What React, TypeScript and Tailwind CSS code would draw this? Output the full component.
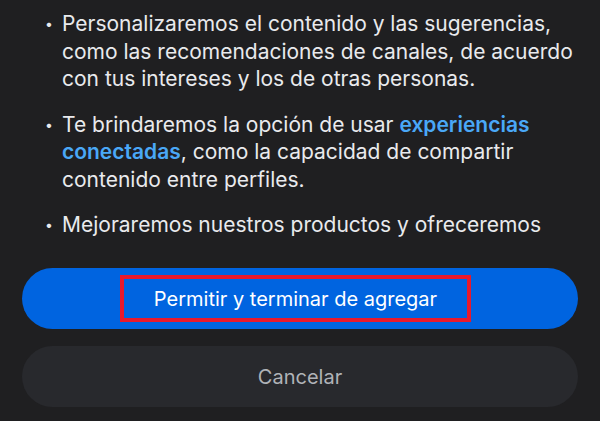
import React from "react";

type Item = { parts: { text: string; link?: boolean }[] };

const items: Item[] = [
  {
    parts: [
      {
        text: "Personalizaremos el contenido y las sugerencias, como las recomendaciones de canales, de acuerdo con tus intereses y los de otras personas.",
      },
    ],
  },
  {
    parts: [
      { text: "Te brindaremos la opción de usar " },
      { text: "experiencias conectadas", link: true },
      { text: ", como la capacidad de compartir contenido entre perfiles." },
    ],
  },
  {
    parts: [
      {
        text: "Mejoraremos nuestros productos y ofreceremos anuncios más relevantes en función de tu actividad.",
      },
    ],
  },
];

const App = () => {
  return (
    <div
      className="w-[600px] h-[421px] bg-[#1f1f21] flex flex-col overflow-hidden"
      style={{ fontFamily: "Inter, 'Noto Sans', sans-serif" }}
    >
      <div className="h-[238px] overflow-hidden pt-[10px] pl-[42px] pr-[20px]">
        <ul className="flex flex-col gap-[18px]">
          {items.map((item, i) => (
            <li key={i} className="flex text-[21px] leading-[27.5px] text-[#e9eaed]">
              <span className="w-[20px] shrink-0 text-[14px] pl-[3px]">•</span>
              <span>
                {item.parts.map((p, j) =>
                  p.link ? (
                    <span key={j} className="font-semibold text-[#4aa8f7]">
                      {p.text}
                    </span>
                  ) : (
                    <span key={j}>{p.text}</span>
                  )
                )}
              </span>
            </li>
          ))}
        </ul>
      </div>

      <div className="flex flex-col gap-[17px] px-[22px] pt-[30px]">
        <button className="h-[61px] rounded-full bg-[#0064e0] flex items-center justify-center">
          <span className="-ml-[9px] border-[4px] border-[#e8192c] h-[47px] w-[351px] flex items-center justify-center text-[20px] text-white">
            Permitir y terminar de agregar
          </span>
        </button>
        <button className="h-[61px] rounded-full bg-[#28292d] flex items-center justify-center text-[20px] text-[#b0b3b8]">
          Cancelar
        </button>
      </div>
    </div>
  );
};

export default App;
